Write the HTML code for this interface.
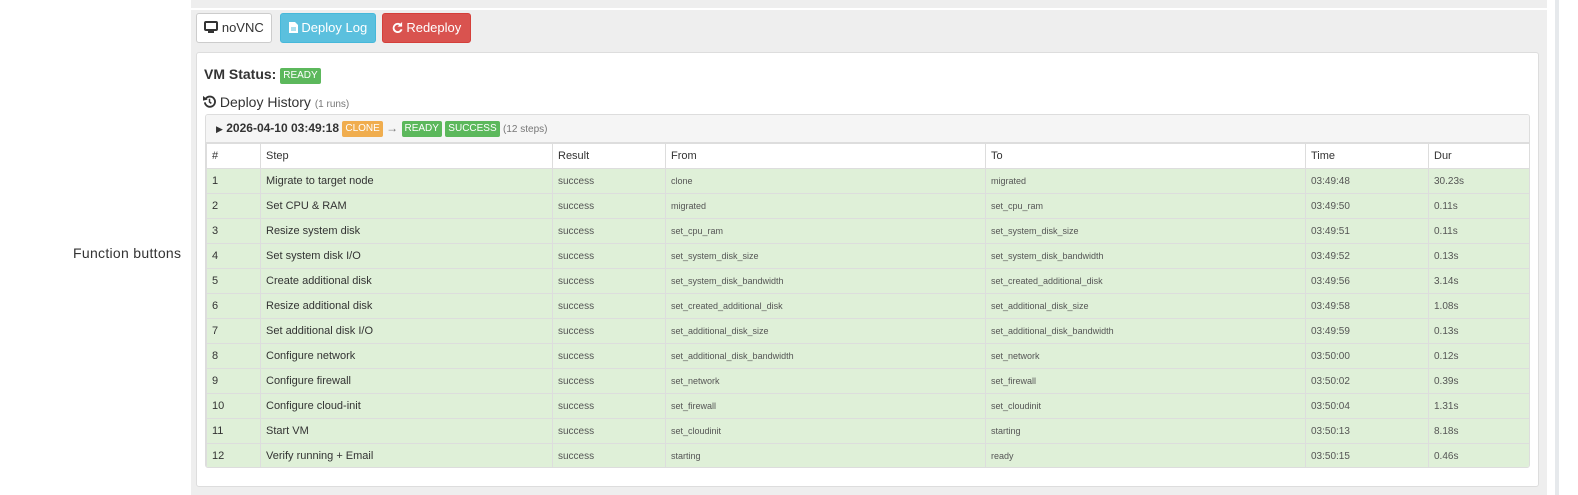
<!DOCTYPE html>
<html><head><meta charset="utf-8"><style>
*{box-sizing:border-box;margin:0;padding:0}
body{width:1578px;height:495px;background:#fff;font-family:"Liberation Sans",sans-serif;color:#333;position:relative;overflow:hidden}
.side{position:absolute;left:73px;top:245px;font-size:14px;color:#333;letter-spacing:0.3px}
.gray{position:absolute;left:191px;top:0;width:1356px;height:495px;background:#eee}
.wl{position:absolute;left:191px;top:8px;width:1356px;height:2px;background:#fff}
.rb{position:absolute;left:1555px;top:0;width:4px;height:495px;background:#e6e9ec}
.btn{position:absolute;top:13px;height:30px;border-radius:3px;font-size:13px;line-height:28px;border:1px solid;white-space:nowrap;text-align:center}
.card{position:absolute;left:196px;top:52px;width:1343px;height:435px;background:#fff;border:1px solid #ddd;border-radius:3px}
.lbl{display:inline-block;color:#fff;font-size:10px;padding:2px 3px;border-radius:2px;line-height:12px;vertical-align:1px;font-weight:normal}
.inner{position:absolute;left:205px;top:114px;width:1325px;height:354px;border:1px solid #ddd;border-radius:3px;overflow:hidden}
.hd{height:28px;background:#f5f5f5;border-bottom:1px solid #ddd;font-size:12px;line-height:27px;padding-left:10px;white-space:nowrap}
table{border-collapse:collapse;width:1323px;table-layout:fixed}
td,th{border:1px solid #ddd;height:25px;padding:0 5px;font-size:11px;text-align:left;font-weight:normal;color:#333;white-space:nowrap;overflow:hidden}
tr.g td{background:#dff0d8}
td.s{font-size:9px;color:#555}
td.r{color:#555;font-size:10px}
</style></head><body>
<div class="side">Function buttons</div>
<div class="gray"></div><div class="wl"></div><div class="rb"></div>
<div class="btn" style="left:196px;width:76px;background:#fff;border-color:#ccc;color:#333">
<svg width="14" height="12" viewBox="0 0 14 12" style="vertical-align:-1px"><rect x="1" y="1" width="12" height="8" rx="1" fill="none" stroke="#333" stroke-width="2"/><rect x="4" y="10" width="6" height="2" fill="#333"/></svg> noVNC</div>
<div class="btn" style="left:280px;width:96px;background:#5bc0de;border-color:#46b8da;color:#fff">
<svg width="9" height="11" viewBox="0 0 9 11" style="vertical-align:-1px"><path d="M0 0H6L9 3V11H0Z" fill="#fff"/><path d="M2 6H7M2 8H7" stroke="#5bc0de"/></svg> Deploy Log</div>
<div class="btn" style="left:382px;width:89px;background:#d9534f;border-color:#d43f3a;color:#fff">
<svg width="11" height="11" viewBox="0 0 12 12" style="vertical-align:-1px"><path d="M10 4A4.5 4.5 0 1 0 10.5 8" fill="none" stroke="#fff" stroke-width="2"/><path d="M11 0V5H6Z" fill="#fff"/></svg> Redeploy</div>
<div class="card">
<div style="position:absolute;left:7px;top:13px;font-size:14px;font-weight:bold;color:#333;white-space:nowrap">VM Status: <span class="lbl" style="background:#5cb85c">READY</span></div>
<div style="position:absolute;left:6px;top:41px;font-size:14px;color:#333;white-space:nowrap"><svg width="13" height="13" viewBox="0 0 14 14" style="vertical-align:-1px"><path d="M3 4A5.5 5.5 0 1 1 2 8" fill="none" stroke="#333" stroke-width="2"/><path d="M0 1L5 5L0 6Z" fill="#333"/><path d="M7 4V7.5L9 9" fill="none" stroke="#333" stroke-width="1.6"/></svg> Deploy History <span style="font-size:10px;color:#777">(1 runs)</span></div>
</div>
<div class="inner">
<div class="hd"><span style="font-size:9px">&#9654;</span><b> 2026-04-10 03:49:18</b> <span class="lbl" style="background:#f0ad4e">CLONE</span> <span style="color:#777">→</span> <span class="lbl" style="background:#5cb85c">READY</span> <span class="lbl" style="background:#5cb85c">SUCCESS</span> <span style="font-size:10px;color:#777">(12 steps)</span></div>
<table>
<colgroup><col style="width:54px"><col style="width:292px"><col style="width:113px"><col style="width:320px"><col style="width:320px"><col style="width:123px"><col style="width:101px"></colgroup>
<tr><th>#</th><th>Step</th><th>Result</th><th>From</th><th>To</th><th>Time</th><th>Dur</th></tr>
<tr class="g"><td>1</td><td>Migrate to target node</td><td class="r">success</td><td class="s">clone</td><td class="s">migrated</td><td class="r">03:49:48</td><td class="r">30.23s</td></tr>
<tr class="g"><td>2</td><td>Set CPU &amp; RAM</td><td class="r">success</td><td class="s">migrated</td><td class="s">set_cpu_ram</td><td class="r">03:49:50</td><td class="r">0.11s</td></tr>
<tr class="g"><td>3</td><td>Resize system disk</td><td class="r">success</td><td class="s">set_cpu_ram</td><td class="s">set_system_disk_size</td><td class="r">03:49:51</td><td class="r">0.11s</td></tr>
<tr class="g"><td>4</td><td>Set system disk I/O</td><td class="r">success</td><td class="s">set_system_disk_size</td><td class="s">set_system_disk_bandwidth</td><td class="r">03:49:52</td><td class="r">0.13s</td></tr>
<tr class="g"><td>5</td><td>Create additional disk</td><td class="r">success</td><td class="s">set_system_disk_bandwidth</td><td class="s">set_created_additional_disk</td><td class="r">03:49:56</td><td class="r">3.14s</td></tr>
<tr class="g"><td>6</td><td>Resize additional disk</td><td class="r">success</td><td class="s">set_created_additional_disk</td><td class="s">set_additional_disk_size</td><td class="r">03:49:58</td><td class="r">1.08s</td></tr>
<tr class="g"><td>7</td><td>Set additional disk I/O</td><td class="r">success</td><td class="s">set_additional_disk_size</td><td class="s">set_additional_disk_bandwidth</td><td class="r">03:49:59</td><td class="r">0.13s</td></tr>
<tr class="g"><td>8</td><td>Configure network</td><td class="r">success</td><td class="s">set_additional_disk_bandwidth</td><td class="s">set_network</td><td class="r">03:50:00</td><td class="r">0.12s</td></tr>
<tr class="g"><td>9</td><td>Configure firewall</td><td class="r">success</td><td class="s">set_network</td><td class="s">set_firewall</td><td class="r">03:50:02</td><td class="r">0.39s</td></tr>
<tr class="g"><td>10</td><td>Configure cloud-init</td><td class="r">success</td><td class="s">set_firewall</td><td class="s">set_cloudinit</td><td class="r">03:50:04</td><td class="r">1.31s</td></tr>
<tr class="g"><td>11</td><td>Start VM</td><td class="r">success</td><td class="s">set_cloudinit</td><td class="s">starting</td><td class="r">03:50:13</td><td class="r">8.18s</td></tr>
<tr class="g"><td>12</td><td>Verify running + Email</td><td class="r">success</td><td class="s">starting</td><td class="s">ready</td><td class="r">03:50:15</td><td class="r">0.46s</td></tr>
</table>
</div>
</body></html>
